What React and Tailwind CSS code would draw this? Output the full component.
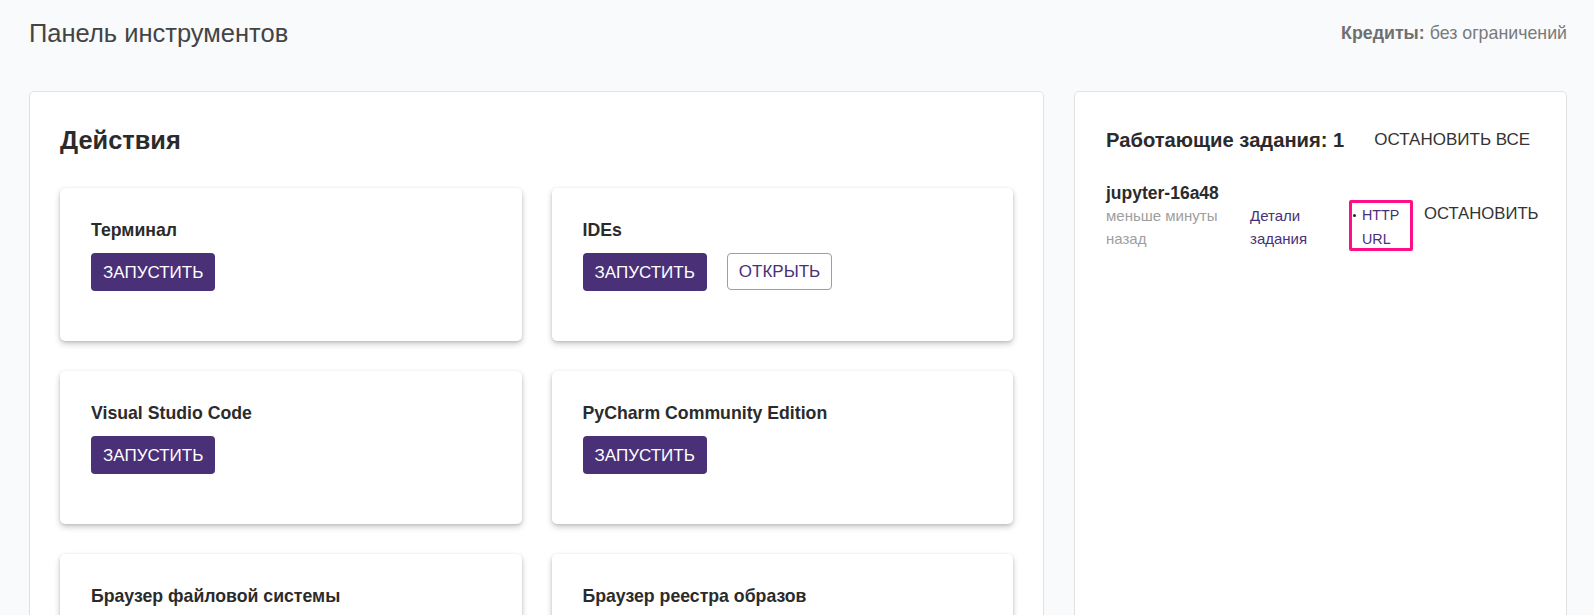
import React from "react";

function LaunchButton() {
  return (
    <button className="h-[38px] px-[12px] rounded-[4px] bg-[#4a3077] text-white text-[17px] leading-none uppercase">
      ЗАПУСТИТЬ
    </button>
  );
}

function OpenButton() {
  return (
    <button className="h-[37px] px-[11px] rounded-[4px] border border-[#a396be] bg-white text-[#4a3077] text-[17px] leading-none uppercase">
      ОТКРЫТЬ
    </button>
  );
}

function Card({ title, open }) {
  return (
    <div className="h-[153px] rounded-[5px] bg-white pl-[31px] pt-[32px] shadow-[0_1px_3px_rgba(0,0,0,0.12),0_3px_6px_rgba(0,0,0,0.2)]">
      <div className="text-[17.7px] leading-[20px] font-bold text-[#2b2b2b]">{title}</div>
      <div className="mt-[13px] flex items-start gap-[20px]">
        <LaunchButton />
        {open && <OpenButton />}
      </div>
    </div>
  );
}

export default function App() {
  return (
    <div className="min-h-screen bg-[#f9fafc] font-['Liberation_Sans',Arial,sans-serif] text-[#333]">
      <div className="h-[66px] pl-[29px] pr-[27px] flex items-center justify-between">
        <h1 className="text-[25.5px] leading-[30px] text-[#444] font-normal">Панель инструментов</h1>
        <div className="text-[17.8px] text-[#7a7a7a]">
          <span className="font-bold text-[#6f6f6f]">Кредиты:</span> без ограничений
        </div>
      </div>
      <div className="mt-[25px] pl-[29px] pr-[27px] flex items-stretch gap-[30px]">
        <div className="w-[1015px] shrink-0 bg-white border border-[#e1e1e1] rounded-[5px] px-[30px] pt-[33px] pb-[40px]">
          <h2 className="text-[25.4px] leading-[30px] font-bold text-[#2b2b2b]">Действия</h2>
          <div className="mt-[33px] grid grid-cols-2 gap-x-[30px] gap-y-[30px]">
            <Card title="Терминал" />
            <Card title="IDEs" open />
            <Card title="Visual Studio Code" />
            <Card title="PyCharm Community Edition" />
            <Card title="Браузер файловой системы" />
            <Card title="Браузер реестра образов" />
          </div>
        </div>
        <div className="flex-1 bg-white border border-[#e1e1e1] rounded-[5px] pl-[31px] pr-[20px] pt-[35px]">
          <div className="flex items-center">
            <h2 className="text-[20.2px] leading-[26px] font-bold text-[#2b2b2b]">Работающие задания: 1</h2>
            <button className="ml-[30px] text-[17px] leading-[26px] text-[#333] uppercase">ОСТАНОВИТЬ ВСЕ</button>
          </div>
          <div className="mt-[29px] flex items-start">
            <div className="w-[144px] shrink-0">
              <div className="text-[17.5px] leading-[22px] font-bold text-[#2b2b2b]">jupyter-16a48</div>
              <div className="mt-[1px] text-[15px] leading-[22.5px] text-[#9e9e9e] w-[125px]">меньше минуты назад</div>
            </div>
            <div className="w-[99px] shrink-0 pt-[23px] text-[15px] leading-[22.5px] text-[#4a3077]">
              <div>Детали</div>
              <div>задания</div>
            </div>
            <div className="shrink-0 pt-[18px]">
              <div className="w-[64px] h-[51px] border-[3px] border-[#ff0f87] rounded-[2px] flex items-start">
                <span className="mt-[11px] ml-[1px] w-[3px] h-[3px] rounded-full bg-[#222] shrink-0"></span>
                <div className="ml-[6px] text-[14.3px] leading-[24px] text-[#4a3077]">
                  <div>HTTP</div>
                  <div>URL</div>
                </div>
              </div>
            </div>
            <button className="ml-[11px] mt-[21px] text-[16.7px] leading-[22px] text-[#333] uppercase">ОСТАНОВИТЬ</button>
          </div>
        </div>
      </div>
    </div>
  );
}
